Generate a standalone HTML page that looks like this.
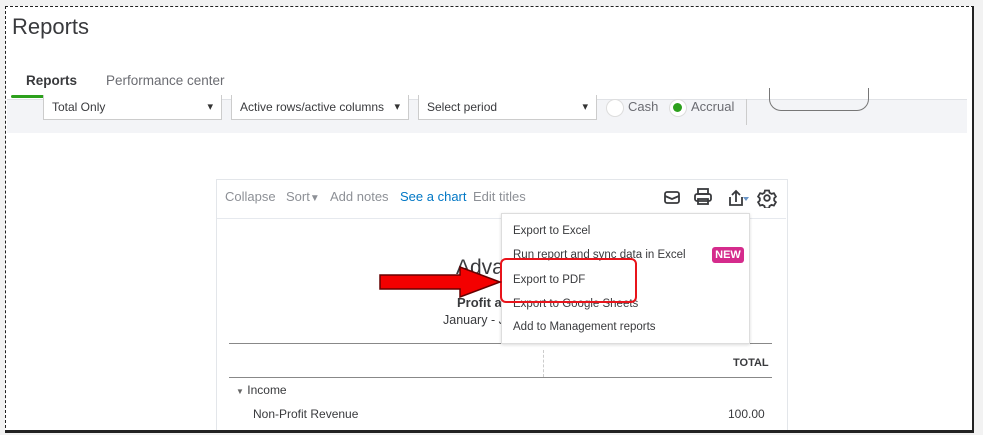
<!DOCTYPE html><html><head><style>
body{margin:0;width:983px;height:435px;background:#f2f2f2;font-family:"Liberation Sans",sans-serif;position:relative;overflow:hidden}
.a{position:absolute}
.frame{left:5px;top:6px;width:966px;height:424px;border:1px dashed #222;border-right:2px solid #222;border-bottom:2px solid #222;background:#fff}
.sel{position:absolute;top:95px;height:25px;background:#fff;border:1px solid #ccc;border-top:none;font-size:12px;color:#393a3d;line-height:24px;padding-left:8px;box-sizing:border-box}
.sel:after{content:"▾";position:absolute;right:8px;top:0;font-size:11px;color:#333}
.tb{font-size:13px;color:#8d9096;top:189px}
.mi{position:absolute;left:513px;font-size:11.5px;color:#393a3d}
</style></head><body>
<div class="a frame"></div>
<div class="a" style="left:12px;top:14px;font-size:22px;color:#393a3d">Reports</div>
<div class="a" style="left:26px;top:73px;font-size:13.5px;font-weight:bold;color:#393a3d">Reports</div>
<div class="a" style="left:106px;top:73px;font-size:13.5px;color:#6b6c72">Performance center</div>
<div class="a" style="left:11px;top:95px;width:80px;height:3px;background:#2ca01c;border-radius:2px"></div>
<div class="a" style="left:7px;top:99px;width:960px;height:33px;background:#f3f4f7;border-top:1px solid #e0e2e6"></div>
<div class="sel" style="left:43px;width:179px">Total Only</div>
<div class="sel" style="left:231px;width:178px">Active rows/active columns</div>
<div class="sel" style="left:418px;width:179px">Select period</div>
<div class="a" style="left:606px;top:99px;width:16px;height:16px;border-radius:50%;background:#fff;border:1px solid #ddd"></div>
<div class="a" style="left:628px;top:99px;font-size:13px;color:#6b6c72">Cash</div>
<div class="a" style="left:669px;top:99px;width:16px;height:16px;border-radius:50%;background:#fff;border:1px solid #ddd"></div>
<div class="a" style="left:673px;top:103px;width:9px;height:9px;border-radius:50%;background:#2ca01c"></div>
<div class="a" style="left:691px;top:99px;font-size:13px;color:#6b6c72">Accrual</div>
<div class="a" style="left:746px;top:99px;width:1px;height:26px;background:#ccc"></div>
<div class="a" style="left:769px;top:88px;width:98px;height:22px;border:1px solid #777;border-top:none;border-radius:0 0 12px 12px"></div>
<div class="a" style="left:216px;top:179px;width:570px;height:252px;background:#fff;border:1px solid #e3e6ea;border-bottom:none"></div>
<div class="a" style="left:217px;top:218px;width:569px;height:1px;background:#e6e9ee"></div>
<div class="a tb" style="left:225px">Collapse</div>
<div class="a tb" style="left:286px">Sort<span style="font-size:10px">▼</span></div>
<div class="a tb" style="left:330px">Add notes</div>
<div class="a tb" style="left:400px;color:#0077c5">See a chart</div>
<div class="a tb" style="left:473px">Edit titles</div>
<svg class="a" style="left:660px;top:188px" width="120" height="20" fill="none" stroke="#393a3d" stroke-width="1.8">
<rect x="5" y="4" width="14" height="11" rx="2"/><path d="M5 8l7 3 7-3"/>
<rect x="38" y="1" width="10" height="5"/><rect x="35" y="6" width="16" height="7" rx="2"/><rect x="38" y="11" width="10" height="5"/>
<path d="M70 9v8h12v-8M76 14V3M72 7l4-4 4 4"/><path d="M83 9h6l-3 4z" fill="#6a96c8" stroke="none"/>
<circle cx="107" cy="10" r="2.8"/><path d="M105 2.5h4l.6 2.3 2 1.1 2.3-.7 2 3.4-1.7 1.7v2.2l1.7 1.7-2 3.4-2.3-.7-2 1.1-.6 2.3h-4l-.6-2.3-2-1.1-2.3.7-2-3.4 1.7-1.7v-2.2l-1.7-1.7 2-3.4 2.3.7 2-1.1z"/>
</svg>
<div class="a" style="left:456px;top:256px;font-size:21px;color:#393a3d">Adva</div>
<div class="a" style="left:457px;top:295px;font-size:13px;font-weight:bold;color:#393a3d">Profit a</div>
<div class="a" style="left:443px;top:313px;font-size:12.5px;color:#393a3d">January - J</div>
<div class="a" style="left:229px;top:343px;width:543px;height:1px;background:#888"></div>
<div class="a" style="left:543px;top:350px;height:27px;border-left:1px dashed #ccc"></div>
<div class="a" style="left:733px;top:357px;font-size:11px;font-weight:bold;color:#393a3d">TOTAL</div>
<div class="a" style="left:229px;top:377px;width:543px;height:1px;background:#888"></div>
<div class="a" style="left:236px;top:383px;font-size:12px;color:#393a3d"><span style="font-size:8px;color:#666">▼</span> Income</div>
<div class="a" style="left:253px;top:407px;font-size:12px;color:#393a3d">Non-Profit Revenue</div>
<div class="a" style="left:728px;top:407px;font-size:12px;color:#393a3d">100.00</div>
<div class="a" style="left:501px;top:213px;width:247px;height:129px;background:#fff;border:1px solid #ddd;box-shadow:0 1px 3px rgba(0,0,0,.15)"></div>
<div class="mi" style="top:225px">Export to Excel</div>
<div class="mi" style="top:249px">Run report and sync data in Excel</div>
<div class="a" style="left:712px;top:247px;width:32px;height:16px;background:#d52b8c;border-radius:3px;color:#fff;font-size:11px;font-weight:bold;text-align:center;line-height:16px">NEW</div>
<div class="mi" style="top:274px">Export to PDF</div>
<div class="mi" style="top:298px">Export to Google Sheets</div>
<div class="mi" style="top:321px">Add to Management reports</div>
<div class="a" style="left:500px;top:258px;width:133px;height:41px;border:2.5px solid #e8141b;border-radius:6px"></div>
<svg class="a" style="left:378px;top:266px" width="125" height="32"><path d="M2 9h80V1l40 15-40 15v-8H2z" fill="#f40000" stroke="#600" stroke-width="1.5"/></svg>
<div class="a" style="left:5px;top:430px;width:969px;height:2px;background:#222"></div>
</body></html>
